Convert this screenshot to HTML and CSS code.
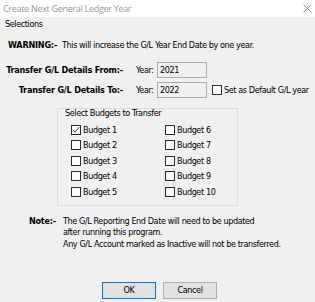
FILE: index.html
```html
<!DOCTYPE html>
<html>
<head>
<meta charset="utf-8">
<link rel="stylesheet" href="styles.css">
</head>
<body>
<div class="dialog">
  <div class="titlebar">
    <span class="title">Create Next General Ledger Year</span>
    <svg class="close" width="9" height="9" viewBox="0 0 9 9"><path d="M0.5 0.5 L8.5 8.5 M8.5 0.5 L0.5 8.5" stroke="#8a8a8a" stroke-width="0.9" fill="none"/></svg>
  </div>
  <div class="content">
    <div class="section">Selections</div>
    <div class="warning"><b class="warn-label">WARNING:-</b><span>This will increase the G/L Year End Date by one year.</span></div>
    <div class="years">
      <b class="ylabel">Transfer G/L Details From:-</b>
      <span class="yword">Year:</span>
      <span class="field">2021</span>
      <span></span>
      <b class="ylabel">Transfer G/L Details To:-</b>
      <span class="yword">Year:</span>
      <span class="field">2022</span>
      <label class="chk"><span class="box"></span><span>Set as Default G/L year</span></label>
    </div>
    <div class="group">
      <div class="group-title">Select Budgets to Transfer</div>
      <div class="budgets">
        <label class="chk"><span class="box"><svg width="8" height="8" viewBox="0 0 8 8"><path d="M0.8 3.8 L3 6.2 L7.3 1" stroke="#222" stroke-width="0.9" fill="none"/></svg></span><span>Budget 1</span></label>
        <label class="chk"><span class="box"></span><span>Budget 6</span></label>
        <label class="chk"><span class="box"></span><span>Budget 2</span></label>
        <label class="chk"><span class="box"></span><span>Budget 7</span></label>
        <label class="chk"><span class="box"></span><span>Budget 3</span></label>
        <label class="chk"><span class="box"></span><span>Budget 8</span></label>
        <label class="chk"><span class="box"></span><span>Budget 4</span></label>
        <label class="chk"><span class="box"></span><span>Budget 9</span></label>
        <label class="chk"><span class="box"></span><span>Budget 5</span></label>
        <label class="chk"><span class="box"></span><span>Budget 10</span></label>
      </div>
    </div>
    <div class="note">
      <b class="note-label">Note:-</b>
      <div class="note-text">
        <div>The G/L Reporting End Date will need to be updated<br>after running this program.</div>
        <div class="note-last">Any G/L Account marked as Inactive will not be transferred.</div>
      </div>
    </div>
    <div class="buttons">
      <span class="btn default">OK</span>
      <span class="btn">Cancel</span>
    </div>
  </div>
</div>
</body>
</html>
```
FILE: styles.css
```css
html, body {
  margin: 0;
  padding: 0;
  background: #f0f0f0;
}
body {
  font-family: "DejaVu Sans Condensed", "DejaVu Sans", sans-serif;
  font-size: 9px;
  letter-spacing: -0.4px;
  color: #000;
}
b {
  letter-spacing: -0.2px;
}
.dialog {
  width: 315px;
  height: 302px;
  overflow: hidden;
}
.titlebar {
  height: 17px;
  background: #fff;
  display: flex;
  align-items: center;
  justify-content: space-between;
  padding: 0 3px 0 3px;
}
.title {
  color: #9a9a9a;
  font-family: "Open Sans", sans-serif;
  font-size: 9px;
  letter-spacing: -0.3px;
}
.section {
  margin-top: 1px;
  padding-left: 5px;
  line-height: 12px;
}
.warning {
  display: flex;
  margin-top: 9px;
  padding-left: 8px;
  line-height: 12px;
}
.warn-label {
  width: 54px;
}
.years {
  display: grid;
  grid-template-columns: 118px 34px 50px auto;
  row-gap: 4px;
  align-items: center;
  margin-top: 11px;
  padding-left: 5px;
}
.ylabel {
  text-align: right;
}
.yword {
  padding-left: 13px;
}
.field {
  height: 14px;
  line-height: 14px;
  border: 1px solid #ababab;
  background: #f0f0f0;
  padding-left: 2px;
}
.chk {
  display: flex;
  align-items: center;
  gap: 2px;
}
.years .chk {
  margin-left: 5px;
}
.box {
  width: 8px;
  height: 8px;
  border: 1px solid #2b2b2b;
  background: #fff;
  display: flex;
  align-items: center;
  justify-content: center;
  flex: none;
}
.group {
  margin: 10px 0 0 57px;
  width: 179px;
  border: 1px solid #dcdcdc;
  padding: 0 0 5px 0;
}
.group-title {
  padding-left: 7px;
  line-height: 9px;
}
.budgets {
  display: grid;
  grid-template-columns: 94px auto;
  grid-auto-rows: 15.5px;
  align-items: center;
  padding: 4px 0 0 13px;
}
.note {
  display: flex;
  margin-top: 10px;
  line-height: 11px;
}
.note-label {
  width: 56px;
  text-align: right;
  padding-right: 7px;
}
.note-last {
  margin-top: 1px;
}
.buttons {
  display: flex;
  justify-content: center;
  gap: 7px;
  margin-top: 32px;
  padding-left: 4px;
}
.btn {
  width: 52px;
  height: 15px;
  line-height: 15px;
  text-align: center;
  background: #e1e1e1;
  border: 1px solid #adadad;
}
.btn.default {
  border-color: #0078d7;
}
```
